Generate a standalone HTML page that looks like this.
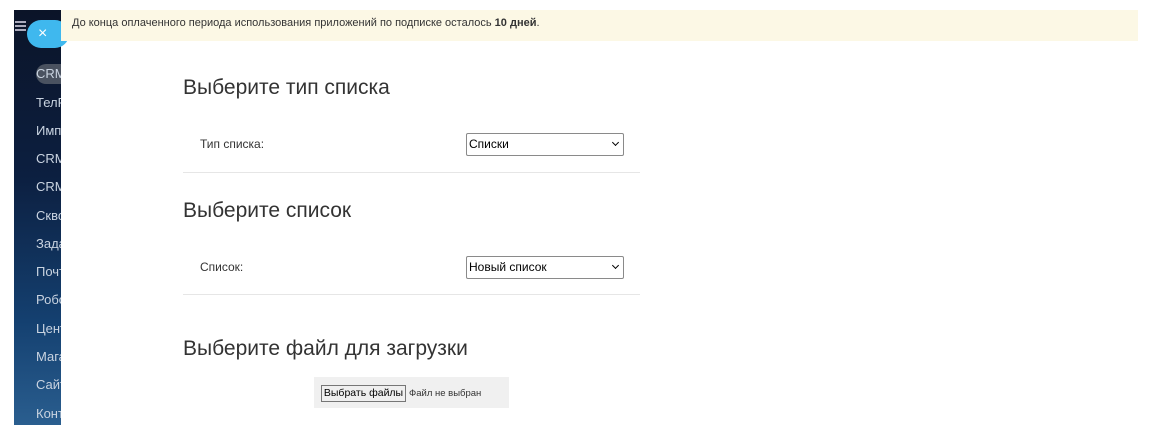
<!DOCTYPE html><html><head><meta charset="utf-8"><style>
body{margin:0;width:1151px;height:433px;background:#fff;position:relative;overflow:hidden;font-family:"Liberation Sans",sans-serif}
.sb{position:absolute;left:14px;top:10px;width:47px;height:415px;background:linear-gradient(#0b1428 0%,#0c1f40 40%,#144070 75%,#2a5e8f 100%);overflow:hidden}
.sb div{position:absolute;left:22px;color:#c9d3e0;font-size:13px;white-space:nowrap}
.pill{position:absolute;left:14px;top:54px;width:40px;height:20px;border-radius:10px;background:#4a5260}
.close{position:absolute;left:27px;top:20px;width:42px;height:28px;border-radius:14px;background:#3fb8ee;color:#fff;font-size:16px;line-height:28px;text-indent:11px}
.ban{position:absolute;left:61px;top:10px;width:1077px;height:31px;background:#fcf8e5;font-size:11px;color:#333;line-height:26px;text-indent:11px}
h2{position:absolute;left:183px;margin:0;font-weight:normal;font-size:21px;color:#333;font-family:"Liberation Sans",sans-serif}
.lab{position:absolute;left:200px;font-size:12px;color:#333}
.sel{position:absolute;left:466px;width:156px;height:21px;border:1px solid #8a8a8a;border-radius:2px;font-size:12px;line-height:21px;text-indent:2px;color:#000}
.sel:after{content:"";position:absolute;right:5px;top:6px;width:4px;height:4px;border-right:1.5px solid #000;border-bottom:1.5px solid #000;transform:rotate(45deg)}
.hr{position:absolute;left:183px;width:457px;height:1px;background:#e6e6e6}
</style></head><body>
<div class="sb">
<div style="left:1px;top:11px;width:11px;height:2px;background:#aab"></div>
<div style="left:1px;top:15px;width:11px;height:2px;background:#aab"></div>
<div style="left:1px;top:19px;width:11px;height:2px;background:#aab"></div>
<div class="pill"></div>
<div style="top:56px">CRM</div>
<div style="top:85px">ТелРос</div>
<div style="top:113px">Импорт</div>
<div style="top:141px">CRM</div>
<div style="top:169px">CRM</div>
<div style="top:198px">Сквозная</div>
<div style="top:226px">Задачи</div>
<div style="top:254px">Почта</div>
<div style="top:282px">Роботы</div>
<div style="top:311px">Центр</div>
<div style="top:339px">Магазин</div>
<div style="top:367px">Сайты</div>
<div style="top:396px">Контакты</div>
</div>
<div class="close">×</div>
<div class="ban">До конца оплаченного периода использования приложений по подписке осталось <b>10 дней</b>.</div>
<h2 style="top:76px">Выберите тип списка</h2>
<div class="lab" style="top:137px">Тип списка:</div>
<div class="sel" style="top:133px">Списки</div>
<div class="hr" style="top:172px"></div>
<h2 style="top:199px">Выберите список</h2>
<div class="lab" style="top:260px">Список:</div>
<div class="sel" style="top:256px">Новый список</div>
<div class="hr" style="top:294px"></div>
<h2 style="top:337px">Выберите файл для загрузки</h2>
<div style="position:absolute;left:314px;top:377px;width:195px;height:31px;background:#f0f0f0"></div>
<div style="position:absolute;left:321px;top:385px;width:83px;height:15px;border:1px solid #767676;background:#efefef;font-size:10.5px;line-height:15px;text-align:center;color:#000">Выбрать файлы</div>
<div style="position:absolute;left:409px;top:388px;font-size:9.5px;color:#333">Файл не выбран</div>
</body></html>
